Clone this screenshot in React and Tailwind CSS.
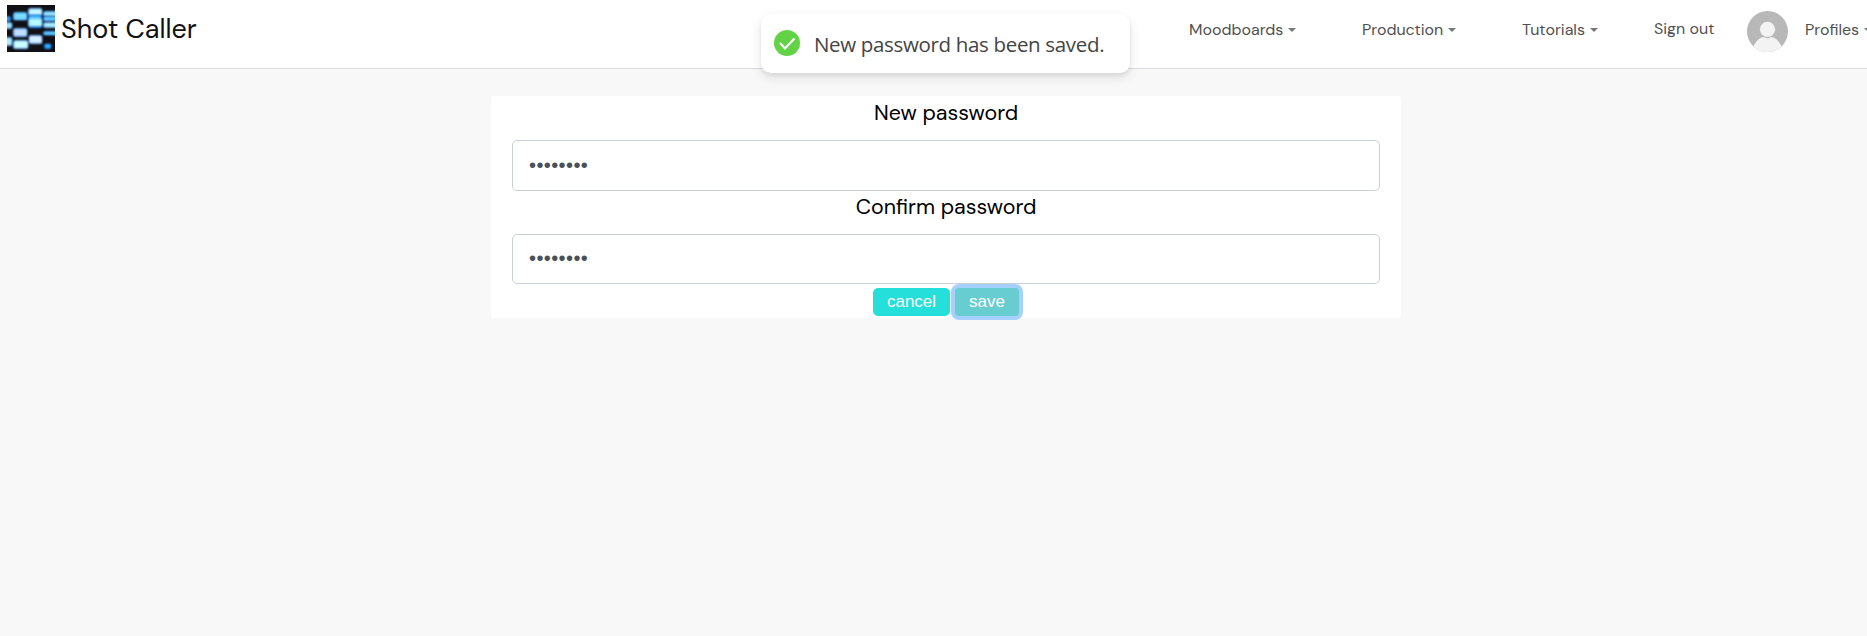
import React from "react";

function Caret() {
  return (
    <svg className="block h-1 w-2 shrink-0" viewBox="0 0 8 4">
      <path d="M0 0H8L4 4Z" fill="#777" />
    </svg>
  );
}

function NavItem({ label, className }) {
  return (
    <a className={`flex shrink-0 items-center justify-between ${className}`}>
      <span>{label}</span>
      <Caret />
    </a>
  );
}

const CELLS = [
  [-3, 11.5, 6.5, 4.5, "#2a9dff"], [-3, 17.5, 8, 6, "#9fe6ff"], [-4, 32.5, 9, 8, "#abf0ff"],
  [6.500, 7.5, 13.5, 7.5, "#7cdcff"], [6.5, 23.5, 13.5, 8, "#bde0ff"], [6.5, 35.5, 14.5, 8, "#c9ffff"],
  [21.5, 3.5, 13.5, 6.5, "#c5f6ff"], [22, 10, 12, 5, "#47b4ff"], [21.5, 13.5, 13.5, 8, "#b5faff"], [22, 30.5, 13, 8, "#d4f0ff"],
  [36.5, 6.5, 14, 4.5, "#9ae6ff"], [36.5, 11.5, 14, 4.5, "#5fc8ff"], [36.5, 17.5, 14, 5, "#aceeff"], [36.5, 26.5, 14, 3.5, "#63d2ff"], [37.5, 39, 6.5, 4.5, "#2fb0ff"],
];

function Logo() {
  return (
    <svg className="block h-[47px] w-12 shrink-0" viewBox="0 0 48 47">
      <defs>
        <filter id="glow" x="-30%" y="-50%" width="160%" height="200%" colorInterpolationFilters="sRGB"><feGaussianBlur stdDeviation="1.1" /></filter>
        <filter id="soft" x="-30%" y="-50%" width="160%" height="200%" colorInterpolationFilters="sRGB"><feGaussianBlur stdDeviation="0.85" /></filter>
      </defs>
      <rect width="48" height="47" fill="#101015" />
      <rect x="22" y="6" width="12.5" height="17" fill="#0868dd" filter="url(#glow)" />
      {CELLS.map(([x, y, w, h], i) => (
        <rect key={i} x={x} y={y} width={w} height={h} rx="1.5" fill="#0b48b8" filter="url(#glow)" />
      ))}
      {CELLS.map(([x, y, w, h, c], i) => (
        <rect key={i} x={x} y={y} width={w} height={h} rx="1.5" fill={c} filter="url(#soft)" />
      ))}
    </svg>
  );
}

function Header() {
  return (
    <header className="flex h-[69px] items-start overflow-hidden border-b border-[#d9dae1] bg-white pl-[7px] text-[16px] leading-6 text-[#505050]">
      <a className="flex items-start pt-[5px] text-[#111]">
        <Logo />
        <span className="ml-[6px] pt-[8px] text-[27px] leading-8 whitespace-nowrap">Shot Caller</span>
      </a>
      <nav className="ml-auto flex h-full shrink-0 items-start">
        <NavItem label="Moodboards" className="mr-[66px] mt-[18px] w-[107px]" />
        <NavItem label="Production" className="mr-[66px] mt-[18px] w-[94px]" />
        <NavItem label="Tutorials" className="mr-[56px] mt-[18px] w-[76px]" />
        <a className="mt-[17px] w-[61px] shrink-0 whitespace-nowrap">Sign out</a>
        <svg className="mt-[11px] mr-[17px] ml-8 block h-[41px] w-[41px] shrink-0" viewBox="0 0 41 41">
          <clipPath id="round"><circle cx="20.5" cy="20.5" r="20.5" /></clipPath>
          <g clipPath="url(#round)">
            <rect width="41" height="41" fill="#b8b8b8" />
            <circle cx="20.5" cy="18.3" r="7.6" fill="#f3f3f3" />
            <path d="M6 36C9 30 13 26 17 26Q20.500 28.500 24 26C28 26 32 30 35 36V41H6Z" fill="#f3f3f3" />
          </g>
        </svg>
        <NavItem label="Profiles" className="-mr-[5px] mt-[18px] w-[67px]" />
      </nav>
    </header>
  );
}

function Field({ label, labelClass, boxClass }) {
  return (
    <div>
      <div className={`flex justify-center text-[21.4px] leading-6 text-black ${labelClass}`}>
        <span className="whitespace-nowrap">{label}</span>
      </div>
      <div className={`flex items-center rounded-[5px] border border-[#cbd0d7] bg-white pb-[2px] pl-4 ${boxClass}`}>
        <span className="font-['Liberation_Sans',sans-serif] text-[20px] leading-5 tracking-[0.4px] text-[#495057]">••••••••</span>
      </div>
    </div>
  );
}

function Toast() {
  return (
    <div className="absolute top-[14px] left-[761px] flex h-[59px] w-[369px] items-center rounded-[10px] bg-white pl-[13px] shadow-[0_4px_12px_rgba(0,0,0,0.1),0_3px_4px_rgba(0,0,0,0.06)]">
      <svg className="mb-[2px] block h-[26px] w-[26px] shrink-0" viewBox="0 0 26 26">
        <circle cx="13" cy="13" r="13" fill="#61d345" />
        <path d="M6 13L11 18.500L20.500 8.500" fill="none" stroke="#fff" strokeWidth="2.200" />
      </svg>
      <span className="ml-[14px] font-['Open_Sans',sans-serif] text-[20.5px] leading-7 tracking-[-0.33px] whitespace-nowrap text-[#444]">New password has been saved.</span>
    </div>
  );
}

export default function App() {
  return (
    <div className="relative h-[636px] w-full overflow-hidden bg-[#f8f8f8] font-['DM_Sans',Inter,sans-serif]">
      <Header />
      <main className="mt-[27px] ml-[491px] h-[222px] w-[910px] rounded-[3px] bg-white px-[21px]">
        <Field label="New password" labelClass="h-11 pt-[5px]" boxClass="h-[51px]" />
        <Field label="Confirm password" labelClass="h-[43px] pt-1" boxClass="h-[50px]" />
        <div className="flex gap-[5px] pt-1 pl-[361px] font-['Liberation_Sans',sans-serif] text-[17px] leading-7 text-white">
          <button className="h-7 w-[77px] rounded-[5px] bg-[#25e0da]">cancel</button>
          <button className="h-7 w-16 rounded-[4px] bg-[#67cdd0] shadow-[0_0_0_4px_#a6d0ff]">save</button>
        </div>
      </main>
      <Toast />
    </div>
  );
}
